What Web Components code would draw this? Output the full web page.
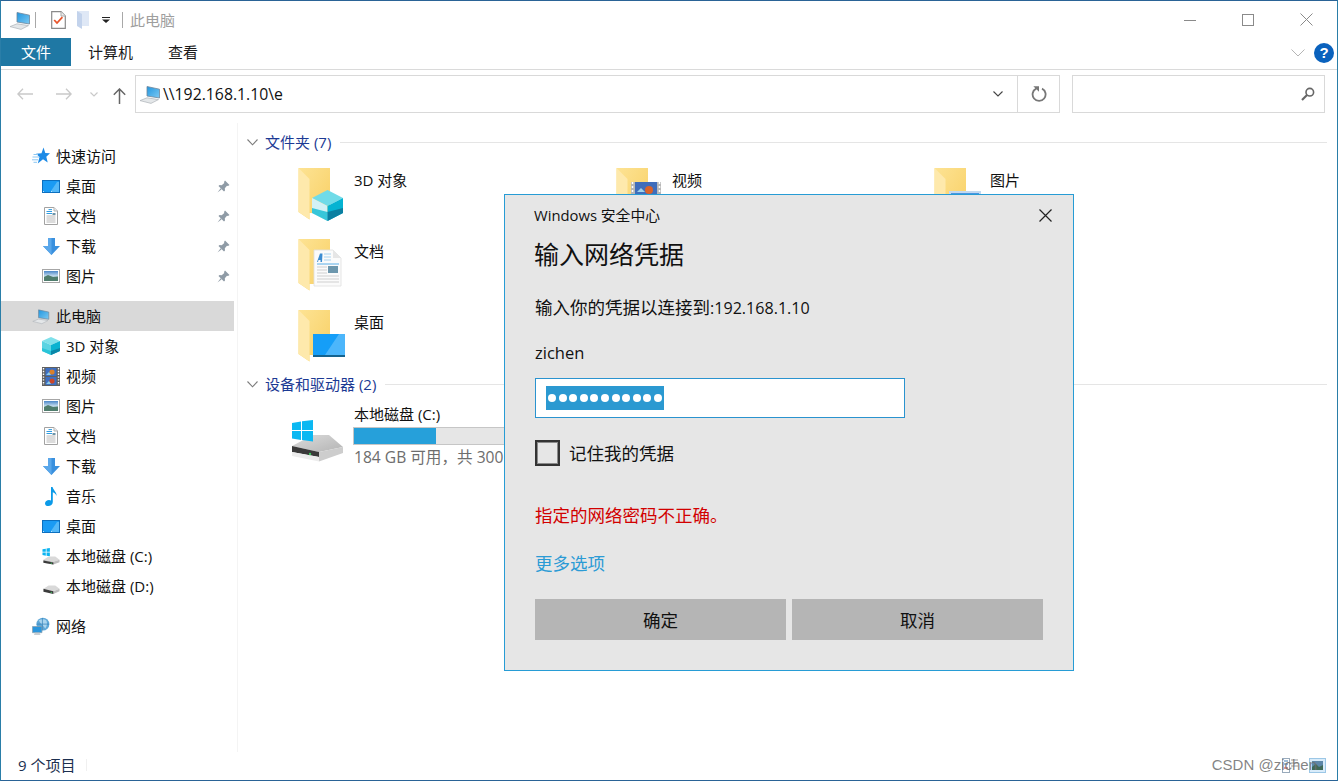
<!DOCTYPE html>
<html lang="zh-CN">
<head>
<meta charset="utf-8">
<title>此电脑</title>
<style>
html,body{margin:0;padding:0;height:100%;background:#fff;}
body{font:15px/20px "Open Sans","Noto Sans CJK SC",sans-serif;color:#000;overflow:hidden;}
</style>
</head>
<body>
<x-window>
  <x-titlebar slot="title" label="此电脑"></x-titlebar>
  <x-ribbon slot="ribbon"></x-ribbon>
  <x-addressbar slot="address" path="\\192.168.1.10\e"></x-addressbar>
  <x-nav slot="nav">
    <x-nav-item level="0" icon="star">快速访问</x-nav-item>
    <x-nav-item icon="desktop" pinned>桌面</x-nav-item>
    <x-nav-item icon="doc" pinned>文档</x-nav-item>
    <x-nav-item icon="download" pinned>下载</x-nav-item>
    <x-nav-item icon="picture" pinned>图片</x-nav-item>
    <x-nav-item level="0" icon="computer" selected gap>此电脑</x-nav-item>
    <x-nav-item icon="cube">3D 对象</x-nav-item>
    <x-nav-item icon="film">视频</x-nav-item>
    <x-nav-item icon="picture">图片</x-nav-item>
    <x-nav-item icon="doc">文档</x-nav-item>
    <x-nav-item icon="download">下载</x-nav-item>
    <x-nav-item icon="music">音乐</x-nav-item>
    <x-nav-item icon="desktop">桌面</x-nav-item>
    <x-nav-item icon="drivewin">本地磁盘 (C:)</x-nav-item>
    <x-nav-item icon="drive">本地磁盘 (D:)</x-nav-item>
    <x-nav-item level="0" icon="network" gap>网络</x-nav-item>
  </x-nav>
  <x-pane slot="main">
    <x-group label="文件夹 (7)">
      <x-tile overlay="cube">3D 对象</x-tile>
      <x-tile overlay="film">视频</x-tile>
      <x-tile overlay="pic">图片</x-tile>
      <x-tile overlay="doc" newrow>文档</x-tile>
      <x-tile overlay="desk" newrow>桌面</x-tile>
    </x-group>
    <x-group label="设备和驱动器 (2)" drives>
      <x-drive label="本地磁盘 (C:)" detail="184 GB 可用，共 300 GB" used="82"></x-drive>
    </x-group>
  </x-pane>
  <x-statusbar slot="status" count="9 个项目"></x-statusbar>
  <x-credential-dialog slot="overlay"></x-credential-dialog>
</x-window>

<script>
const ICONS = {
  computer:{w:22,h:20,s:`<defs><linearGradient id="g" x1="0" y1="0" x2="1" y2="1"><stop offset="0" stop-color="#2196e0"/><stop offset="1" stop-color="#7cc9f2"/></linearGradient></defs>
    <path d="M8 2.500 20.500 5.200V14L8 12Z" fill="url(#g)" stroke="#70869a" stroke-width=".8"/>
    <path d="M1 16.600 8 13.800 19.500 15.600 12 19.400Z" fill="#e4e7e9" stroke="#aeb3b8" stroke-width=".7"/>`},
  check:{w:15,h:18,s:`<path d="M.7.700H10L14.300 5V17.300H.7Z" fill="#fff" stroke="#8a8a8a" stroke-width="1.200"/>
    <path d="M10 .7V5H14.300" fill="#eee" stroke="#a8a8a8"/>
    <path d="M3.200 9 6 12 11.400 6.200" fill="none" stroke="#e8552b" stroke-width="1.800"/>`},
  paleFolder:{w:13,h:18,s:`<path d="M0 0H12V15H0Z" fill="#dfe8f6"/><path d="M0 0 5 3V18L0 15Z" fill="#c3d3ec"/>`},
  star:{w:18,h:18,s:`<path d="M11.500 .5 13.300 6 18 6.200 14.300 9.700 15.700 15.500 11 12.300 5.800 16.500 7.500 10 4 6.800 9.500 6.300Z" fill="#1c8ae6"/>
    <path d="M1.500 7.500H6M.5 10H7M0 12.800H6M1.500 15.300H5" stroke="#8cc7f2" stroke-width="1"/>`},
  desktop:{w:18,h:13,s:`<rect x=".5" y=".5" width="17" height="12" fill="#1a9bf4" stroke="#0d6fbe"/><path d="M9 11 15 2H17V12H9Z" fill="#53b8f8"/><path d="M1 11.500H17" stroke="#bfe3fb" stroke-dasharray="1 7"/>`},
  doc:{w:14,h:18,s:`<path d="M.5.500H10L13.500 4V17.500H.5Z" fill="#fff" stroke="#a2a2a2"/><path d="M10 .5V4H13.500" fill="#e9e9e9" stroke="#b5b5b5"/>
    <path d="M2.500 4.500H8M4.500 2.600H8M2.500 6.500H8" stroke="#2f9be0" stroke-width="1"/><path d="M2.500 9H11.500M2.500 11H11.500M2.500 13H11.500M2.500 15H11.500" stroke="#b8b8b8" stroke-width="1"/><rect x="8.500" y="6" width="3" height="2" fill="#6e94a8"/>`},
  download:{w:17,h:17,s:`<path d="M5 0H12V8H17L8.500 17 0 8H5Z" fill="#3a90de"/><path d="M5 0H8.500V17L0 8H5Z" fill="#5aa7ea"/>`},
  picture:{w:18,h:14,s:`<defs><linearGradient id="g" x1="0" y1="0" x2="0" y2="1"><stop offset="0" stop-color="#4a86c8"/><stop offset=".5" stop-color="#c4dcee"/><stop offset="1" stop-color="#5c8a78"/></linearGradient></defs>
    <rect x=".5" y=".5" width="17" height="13" fill="#fff" stroke="#a6a6a6"/><rect x="2" y="2" width="14" height="10" fill="url(#g)"/><path d="M2 8 6 6 11 8 16 7.500V12H2Z" fill="#4f7d6d"/>`},
  cube:{w:18,h:18,s:`<path d="M9 0 18 4 9 8 0 4Z" fill="#7fe0ea"/><path d="M0 4 9 8V18L0 14Z" fill="#5bd3e2"/><path d="M18 4 9 8V18L18 14Z" fill="#09b2d0"/><path d="M0 11 9 14V18L0 14Z" fill="#2ac4d8"/><path d="M18 11 9 14V18L18 14Z" fill="#0a87a8"/>`},
  film:{w:18,h:19,s:`<rect width="18" height="19" fill="#5f5f5f"/><rect x="3.500" y="1" width="11" height="8" fill="#3d6fc2"/><rect x="3.500" y="10" width="11" height="8" fill="#3d6fc2"/>
    <circle cx="10" cy="5" r="2.600" fill="#d9802a"/><circle cx="10" cy="14" r="2.600" fill="#c9462a"/><path d="M4 8 7 5 9 8ZM4 17 7 14 9 17Z" fill="#8ccbe8"/>
    <path d="M1.500 1V18M16.500 1V18" stroke="#fff" stroke-width="1.400" stroke-dasharray="1.400 1.400"/>`},
  music:{w:12,h:19,s:`<path d="M6 0H7.600C8 3 12 5 11.500 9 10.800 7 9.500 5.800 7.800 5.300V15C7.800 17.500 5.500 19 3.300 19 1.400 19 0 18 0 16.400 0 14.500 2 13 4 13 4.800 13 5.500 13.200 6 13.500Z" fill="#0b9ae8"/>`},
  drivewin:{w:19,h:19,s:`<path d="M.5 1.800 4 1.200V4.500H.5ZM4.800 1 8.300.4V4.500H4.800ZM.5 5.300H4V8.600L.5 8ZM4.800 5.300H8.300V9.300L4.800 8.700Z" fill="#0bb4f1"/>
    <path d="M1.500 13 7 9.500H14L18.500 13 12 15Z" fill="#d9d9d9"/><path d="M1.500 13 12 15 18.500 13V15.500L12 18 1.500 16Z" fill="#bdbdbd"/><path d="M1.500 13.800 12 15.800V18L1.500 16Z" fill="#3b3b3b"/><circle cx="9.800" cy="16.500" r=".7" fill="#3fc35f"/>`},
  drive:{w:19,h:19,s:`<path d="M1.500 12 7 8.500H14L18.500 12 12 14.500Z" fill="#d9d9d9"/><path d="M18.500 12 12 14.500V17.500L18.500 14.500Z" fill="#bdbdbd"/><path d="M1.500 12 12 14.500V17.500L1.500 15Z" fill="#3b3b3b"/><circle cx="9.800" cy="15.800" r=".7" fill="#3fc35f"/>`},
  network:{w:19,h:19,s:`<circle cx="11.500" cy="7" r="6.800" fill="#5fa8d8"/><path d="M7 3C10 1.500 13 1.500 15 3 16.500 6 16 9 14 11.500 12 9 9 7 7 3Z" fill="#a9d4ee"/><path d="M11 .5V13.500M5 7H18" stroke="#2e7cb5" stroke-width=".7"/>
    <path d="M.5 9.500H10.500V16H.5Z" fill="#2a96dd" stroke="#8aa0ae" stroke-width=".8"/><path d="M2 18.500H9L8 16H3Z" fill="#c8ced3"/>`},
  pin:{w:13,h:13,s:`<path d="M8 .5 12.500 5 11 6 10 5.700 7.800 8.300 8 10.500 7 11.500 1.500 6 2.500 5 4.700 5.200 7.300 3 7 2Z" fill="#8f9ba6"/><path d="M3.700 8.300.5 12.500 4.700 9.300Z" fill="#8f9ba6"/>`},
  bigDrive:{w:54,h:42,s:`<defs><linearGradient id="b" x1="0" y1="0" x2="1" y2="1"><stop offset="0" stop-color="#dcdcdc"/><stop offset="1" stop-color="#b4b4b4"/></linearGradient></defs>
    <path d="M1 26 22 15H38L52 27 28 32Z" fill="url(#b)"/>
    <path d="M1 26 28 32V37L1 32Z" fill="#3a3a3a"/><path d="M1 32 28 37V41.500L1 36Z" fill="#ececec"/><path d="M28 32 52 27V33L28 41.500Z" fill="#cdcdcd"/>
    <circle cx="19" cy="34" r="1.200" fill="#3fc35f"/>
    <path d="M1 3 10 1.500V10H1ZM11 1.300 22 0V10H11ZM1 11H10V20L1 18.500ZM11 11H22V21.500L11 20Z" fill="#0bb8f2"/>`}
};
function iconMarkup(name){
  const i = ICONS[name];
  return `<svg xmlns="http://www.w3.org/2000/svg" width="${i.w}" height="${i.h}" viewBox="0 0 ${i.w} ${i.h}">${i.s}</svg>`;
}
class Base extends HTMLElement{
  render(html){ if(!this.shadowRoot) this.attachShadow({mode:'open'}); this.shadowRoot.innerHTML = html; }
}
class XIcon extends Base{
  connectedCallback(){
    this.render(`<style>:host{display:inline-flex;align-items:center;justify-content:center;flex:none}svg{display:block}</style>${iconMarkup(this.getAttribute('name'))}`);
  }
}
class XWindow extends Base{
  connectedCallback(){
    this.render(`<style>
      :host{display:flex;flex-direction:column;position:relative;box-sizing:border-box;width:1338px;height:781px;
        border:1px solid #2a7ea8;border-top-color:#2a6396;border-bottom-color:#2a6396;background:#fff;overflow:hidden}
      .body{flex:1;display:flex;min-height:0}
    </style>
    <slot name="title"></slot><slot name="ribbon"></slot><slot name="address"></slot>
    <div class="body"><slot name="nav"></slot><slot name="main"></slot></div>
    <slot name="status"></slot><slot name="overlay"></slot>`);
  }
}
class XTitlebar extends Base{
  connectedCallback(){
    this.render(`<style>
      :host{display:flex;align-items:center;height:37px;color:#9e9e9e;flex:none}
      .sep{width:1px;height:16px;background:#a8a8a8}
      .cap{margin-left:7px;font-size:15px}
      .ctl{display:flex;margin-left:auto;margin-right:2px}
      .ctl b{width:58px;height:37px;display:flex;align-items:center;justify-content:center}
    </style>
    <x-icon name="computer" style="margin-left:8px"></x-icon>
    <span class="sep" style="margin-left:4px"></span>
    <x-icon name="check" style="margin-left:15px"></x-icon>
    <x-icon name="paleFolder" style="margin-left:11px"></x-icon>
    <svg style="margin-left:12px" width="8" height="6" viewBox="0 0 8 6"><path d="M0 0H8V1H0ZM0 2.500H8L4 6Z" fill="#222"/></svg>
    <span class="sep" style="margin-left:12px"></span>
    <span class="cap">${this.getAttribute('label')}</span>
    <div class="ctl">
      <b><svg width="12" height="12" viewBox="0 0 12 12"><path d="M0 6.500H12" stroke="#8a8a8a"/></svg></b>
      <b><svg width="12" height="12" viewBox="0 0 12 12"><rect x=".5" y=".5" width="11" height="11" fill="none" stroke="#8a8a8a"/></svg></b>
      <b><svg width="13" height="13" viewBox="0 0 13 13"><path d="M.5.500 12.500 12.500M12.500.500.500 12.500" stroke="#8a8a8a"/></svg></b>
    </div>`);
  }
}
class XRibbon extends Base{
  connectedCallback(){
    this.render(`<style>
      :host{display:flex;align-items:flex-start;height:31px;flex:none;border-bottom:1px solid #dadada;box-sizing:content-box;font-size:15px}
      .tab{height:28px;display:flex;align-items:center;color:#1b1b1b}
      .file{width:70px;justify-content:center;background:#1f78a4;color:#fff;font-size:15px}
      .right{margin-left:auto;display:flex;align-items:center;height:28px;margin-right:3px;margin-top:1px}
      .help{width:20px;height:20px;border-radius:50%;background:#0a62bd;color:#fff;font:bold 15px/20px "Liberation Sans",sans-serif;text-align:center;margin-left:9px}
    </style>
    <div class="tab file">文件</div>
    <div class="tab" style="margin-left:17px">计算机</div>
    <div class="tab" style="margin-left:35px">查看</div>
    <div class="right">
      <svg width="14" height="8" viewBox="0 0 14 8"><path d="M.5.500 7 7 13.500.500" fill="none" stroke="#b5b5b5"/></svg>
      <span class="help">?</span>
    </div>`);
  }
}
class XAddressbar extends Base{
  connectedCallback(){
    this.render(`<style>
      :host{display:flex;align-items:center;height:38px;margin:5px 0 10px;flex:none}
      .nav{display:flex;align-items:center;width:134px;flex:none}
      .box{display:flex;align-items:center;box-sizing:border-box;height:38px;border:1px solid #d9d9d9}
      .addr{width:925px}
      .path{flex:1;color:#111;font-size:15.800px}
      .pic{margin-left:3px;margin-right:2px}
      .dd{width:38px;display:flex;justify-content:center}
      .ref{width:41px;height:36px;border-left:1px solid #d9d9d9;display:flex;align-items:center;justify-content:center}
      .search{width:253px;margin-left:12px;justify-content:flex-end;padding-right:9px}
    </style>
    <div class="nav">
      <svg style="margin-left:16px" width="16" height="12" viewBox="0 0 16 12"><path d="M16 6H1M6 .7.900 6 6 11.300" fill="none" stroke="#c9c9c9" stroke-width="1.300"/></svg>
      <svg style="margin-left:23px" width="16" height="12" viewBox="0 0 16 12"><path d="M0 6H15M10 .7 15.100 6 10 11.300" fill="none" stroke="#c9c9c9" stroke-width="1.300"/></svg>
      <svg style="margin-left:18px" width="8" height="5" viewBox="0 0 8 5"><path d="M.5.500 4 4 7.500.500" fill="none" stroke="#c9c9c9" stroke-width="1.200"/></svg>
      <svg style="margin-left:15px;margin-top:4px" width="13" height="16" viewBox="0 0 13 16"><path d="M6.500 16V1M.8 6.700 6.500 1 12.200 6.700" fill="none" stroke="#666" stroke-width="1.500"/></svg>
    </div>
    <div class="box addr">
      <x-icon class="pic" name="computer"></x-icon>
      <span class="path">${this.getAttribute('path')}</span>
      <div class="dd"><svg width="10" height="6" viewBox="0 0 10 6"><path d="M.5.500 5 5 9.500.500" fill="none" stroke="#444" stroke-width="1.100"/></svg></div>
      <div class="ref"><svg width="16" height="16" viewBox="0 0 16 16"><path d="M5.200 2.600A6.500 6.500 0 1 0 11 2.600" fill="none" stroke="#777" stroke-width="1.800"/><path d="M1.800 0H7.500V5.500Z" fill="#777" transform="translate(.5 .2)"/></svg></div>
    </div>
    <div class="box search">
      <svg width="14" height="14" viewBox="0 0 14 14"><circle cx="8.800" cy="5.200" r="3.800" fill="none" stroke="#666" stroke-width="1.600"/><path d="M6 8 1 13" stroke="#666" stroke-width="2.200"/></svg>
    </div>`);
  }
}
class XNav extends Base{
  connectedCallback(){
    this.render(`<style>
      :host{display:block;box-sizing:border-box;width:237px;flex:none;padding:18px 3px 0 0;border-right:1px solid #f4f4f4}
      slot{display:block}
    </style><slot></slot>`);
  }
}
class XNavItem extends Base{
  connectedCallback(){
    const top = this.getAttribute('level') === '0';
    const pinned = this.hasAttribute('pinned');
    const sel = this.hasAttribute('selected');
    const gap = this.hasAttribute('gap');
    const name = this.getAttribute('icon');
    this.render(`<style>
      :host{display:flex;align-items:center;height:30px;font-size:15px;color:#111;
        margin-top:${gap?'10px':'0'};background:${sel?'#d9d9d9':'transparent'};padding-left:${top?'31px':'41px'}}
      .i{width:18px;display:flex;justify-content:center;margin-right:6px}
      .t{flex:1;white-space:nowrap}
      .p{margin-right:4px}
    </style>
    <x-icon class="i" name="${name}"></x-icon><span class="t"><slot></slot></span>
    ${pinned?'<x-icon class="p" name="pin"></x-icon>':''}`);
  }
}
class XPane extends Base{
  connectedCallback(){
    this.render(`<style>:host{display:block;flex:1;min-width:0;padding:9px 10px 0 9px;position:relative}slot{display:block}</style><slot></slot>`);
  }
}
class XGroup extends Base{
  connectedCallback(){
    const drives = this.hasAttribute('drives');
    this.render(`<style>
      :host{display:block}
      .h{display:flex;align-items:center;height:20px;color:#1c3a94;font-size:15px}
      .c{margin-right:7px;flex:none}
      .l{flex:1;height:1px;background:#e5e5e5;margin-left:9px}
      .g{display:grid;grid-template-columns:repeat(3,318px);grid-template-rows:${drives?'auto':'71px 71px 64px'};margin:${drives?'10px 0 0 44px':'16px 0 0 51px'}}
      ::slotted(x-tile[newrow]){grid-column:1}
    </style>
    <div class="h"><svg class="c" width="11" height="7" viewBox="0 0 11 7"><path d="M.5.500 5.500 5.800 10.500.500" fill="none" stroke="#7c7c7c" stroke-width="1.100"/></svg><span>${this.getAttribute('label')}</span><span class="l"></span></div>
    <div class="g"><slot></slot></div>`);
  }
}
const OVERLAYS = {
  cube:`<path d="M29.500 22 45 30 29.500 38 14 30Z" fill="#70dbe8"/><path d="M14 30 29.500 38V53L14 45Z" fill="#d3f1f5"/><path d="M14 40 29.500 44V53L14 45Z" fill="#37c6d9"/><path d="M45 30 29.500 38V53L45 45Z" fill="#05b3d2"/><path d="M45 40 29.500 44V53L45 45Z" fill="#0b7fa1"/>`,
  film:`<rect x="15" y="14" width="30" height="26" fill="#b8b8b8"/><path d="M16.500 14V40M43.500 14V40" stroke="#fff" stroke-width="1.500" stroke-dasharray="2 2"/><rect x="19" y="14" width="22" height="26" fill="#3f6dbb"/><circle cx="33" cy="22" r="4" fill="#d9622a"/><path d="M21 24 25 20 29 24Z" fill="#9fd3ea"/>`,
  pic:`<rect x="15" y="23" width="32" height="26" fill="#c3d9f0"/><rect x="17" y="25" width="28" height="22" fill="#4a96e0"/>`,
  doc:`<path d="M16 11H35L43 19V47H16Z" fill="#fbfbfb" stroke="#e0e0e0" stroke-width=".8"/><path d="M35 11V19H43Z" fill="#e6e6e6"/>
    <path d="M19 23 22 14.500H24.500L24 23H22.500V21H20.500L20 23Z" fill="#3d8dd2"/><path d="M26 15H33M26 18H33M26 21H33" stroke="#a9d3ef"/><path d="M19 25H41" stroke="#5aaee6"/><path d="M19 28H29M19 31H29M19 34H29M19 37H41M19 40H41M19 43H41" stroke="#cfcfcf"/><rect x="30" y="27" width="10" height="7" fill="#6d97ad"/>`,
  desk:`<rect x="15" y="24" width="32" height="23" fill="#14638f"/><rect x="15" y="24" width="32" height="21" fill="#159ef8"/><path d="M27 45 41 24H47V45Z" fill="#4cb6fb"/>`
};
class XTile extends Base{
  connectedCallback(){
    this.render(`<style>
      :host{display:flex;align-items:flex-start;gap:8px}
      svg{display:block;flex:none}
      .t{margin-top:2px;font-size:15px;color:#111}
    </style>
    <svg width="48" height="56" viewBox="0 0 48 56">
      <defs><linearGradient id="f" x1="0" y1="0" x2="1" y2="1"><stop offset="0" stop-color="#fde394"/><stop offset="1" stop-color="#f8cf63"/></linearGradient></defs>
      <path d="M.5 0H32V45H11.500V51.500L.5 44Z" fill="url(#f)"/>
      <path d="M.5 0 11.500 11V51.500L.5 44Z" fill="#fee9ac"/>
      ${OVERLAYS[this.getAttribute('overlay')]}
    </svg>
    <span class="t"><slot></slot></span>`);
  }
}
class XDrive extends Base{
  connectedCallback(){
    const used = this.getAttribute('used');
    this.render(`<style>
      :host{display:flex;align-items:flex-start;gap:8px;grid-column:span 2}
      .ic{margin-top:16px}
      .c{display:flex;flex-direction:column;width:240px;font-size:15px;color:#111}
      .n{padding-left:1px}
      .bar{height:18px;margin-top:3px;border:1px solid #c6c6c6;background:#e6e6e6;box-sizing:border-box}
      .bar i{display:block;height:100%;width:${used}px;background:#26a0da}
      .d{color:#6d6d6d;margin-top:2px;padding-left:1px;white-space:nowrap;font-size:15.600px}
    </style>
    <x-icon class="ic" name="bigDrive"></x-icon>
    <div class="c"><span class="n">${this.getAttribute('label')}</span><div class="bar"><i></i></div><span class="d">${this.getAttribute('detail')}</span></div>`);
  }
}
class XStatusbar extends Base{
  connectedCallback(){
    this.render(`<style>
      :host{display:flex;align-items:center;box-sizing:border-box;height:28px;padding-bottom:2px;flex:none;font-size:15px;color:#1c2f4f;position:relative}
      .c{margin-left:17px}
      .s{width:1px;height:12px;background:#f0f0f0;margin-left:11px}
      .v{margin-left:auto;display:flex;align-items:center;gap:11px;margin-right:11px}
      .wm{position:absolute;right:20px;top:3px;font:15px/20px "Liberation Sans",sans-serif;color:rgba(110,110,110,.85);white-space:nowrap}
    </style>
    <span class="c">${this.getAttribute('count')}</span><span class="s"></span>
    <div class="v">
      <svg width="16" height="15" viewBox="0 0 16 15"><rect x=".5" y=".5" width="7" height="14" fill="#fff" stroke="#9ab"/><path d="M2 3H6M2 6H6" stroke="#3a7ab0"/><path d="M2 10H6" stroke="#b33"/><path d="M9 2H16M9 5H16M9 8H16" stroke="#999"/></svg>
      <svg width="17" height="15" viewBox="0 0 17 15"><rect x=".5" y=".5" width="16" height="14" fill="#d9ecfa" stroke="#9cc7e6"/><rect x="3" y="3" width="11" height="9" fill="#5d87a8"/><path d="M3 9 7 6 10 9 14 7V12H3Z" fill="#3f6a58"/></svg>
    </div>
    <span class="wm">CSDN @zichen</span>`);
  }
}
class XCredentialDialog extends Base{
  connectedCallback(){
    this.render(`<style>
      :host{position:absolute;left:503px;top:193px;width:570px;height:477px;box-sizing:border-box;
        border:1px solid #279cd5;background:#e6e6e6;color:#111;display:flex;flex-direction:column;padding:0 30px 0 30px;
        font-size:17.500px;line-height:24px}
      .top{display:flex;align-items:center;justify-content:space-between;height:39px;font-size:14.800px;margin:0 -9px 0 -1px}
      .top svg{margin-top:2px}
      h1{margin:0;font-weight:400;font-size:25px;line-height:36px;margin-top:2px;color:#111;margin-left:-1px}
      .msg{margin-top:23px}
      .msg span{font-size:16.100px}
      .user{margin-top:21px;font-size:16.500px}
      .input{box-sizing:border-box;width:370px;height:40px;margin-top:13px;border:1px solid #2a93cf;background:#fff;display:flex;align-items:center;padding-left:10px}
      .sel{display:flex;align-items:center;gap:2.600px;height:24px;background:#2b99d1;padding:0 2px}
      .sel i{width:8px;height:8px;border-radius:50%;background:#fff;display:block}
      .rem{display:flex;align-items:center;margin-top:22px;height:26px;gap:9px}
      .box{box-sizing:border-box;width:25px;height:26px;border:2px solid #333;outline:1px solid #8a8a8a;outline-offset:-3px}
      .err{color:#d20000;margin-top:37px}
      .more{color:#2b9bd5;margin-top:24px}
      .btns{display:flex;gap:6px;margin-top:24px}
      .btns div{width:251px;height:41px;background:#b5b5b5;display:flex;align-items:center;justify-content:center;color:#111}
    </style>
    <div class="top"><span>Windows 安全中心</span><svg width="13" height="13" viewBox="0 0 13 13"><path d="M.5.500 12.500 12.500M12.500.500.500 12.500" stroke="#222" stroke-width="1.200"/></svg></div>
    <h1>输入网络凭据</h1>
    <div class="msg">输入你的凭据以连接到<span>:192.168.1.10</span></div>
    <div class="user">zichen</div>
    <div class="input"><div class="sel">${'<i></i>'.repeat(11)}</div></div>
    <div class="rem"><span class="box"></span><span>记住我的凭据</span></div>
    <div class="err">指定的网络密码不正确。</div>
    <div class="more">更多选项</div>
    <div class="btns"><div>确定</div><div>取消</div></div>`);
  }
}
customElements.define('x-icon',XIcon);
customElements.define('x-window',XWindow);
customElements.define('x-titlebar',XTitlebar);
customElements.define('x-ribbon',XRibbon);
customElements.define('x-addressbar',XAddressbar);
customElements.define('x-nav',XNav);
customElements.define('x-nav-item',XNavItem);
customElements.define('x-pane',XPane);
customElements.define('x-group',XGroup);
customElements.define('x-tile',XTile);
customElements.define('x-drive',XDrive);
customElements.define('x-statusbar',XStatusbar);
customElements.define('x-credential-dialog',XCredentialDialog);
</script>
</body>
</html>
